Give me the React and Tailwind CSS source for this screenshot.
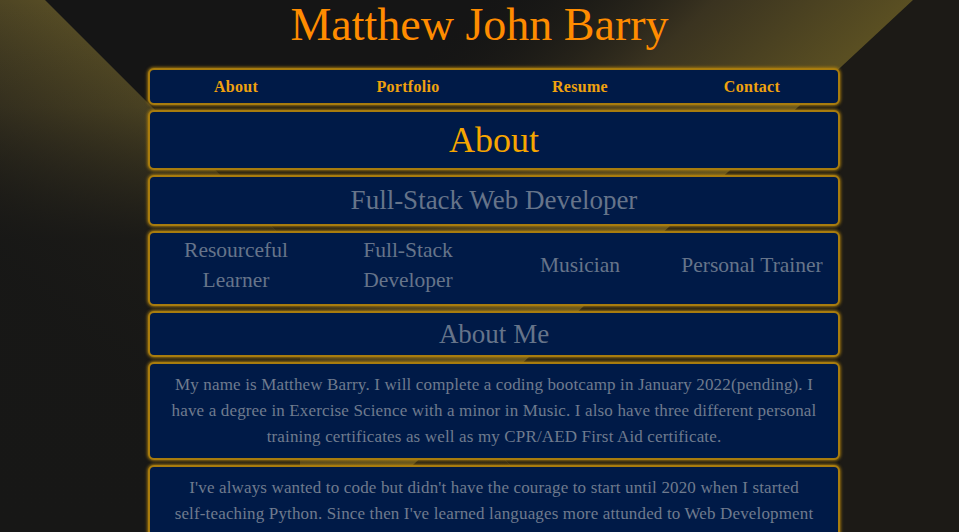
import React from "react";

const traits = [
  ["Resourceful", "Learner"],
  ["Full-Stack", "Developer"],
  ["Musician"],
  ["Personal Trainer"],
];

const navLinks = ["About", "Portfolio", "Resume", "Contact"];

function Backdrop() {
  return (
    <svg className="absolute inset-0 w-full h-full" viewBox="0 0 959 532" preserveAspectRatio="none">
      <defs>
        <linearGradient id="beamL" gradientUnits="userSpaceOnUse" x1="96" y1="50" x2="-60" y2="210">
          <stop offset="0" stopColor="#564c25" />
          <stop offset="0.5" stopColor="#3a3420" />
          <stop offset="1" stopColor="#1c1b17" />
        </linearGradient>
        <linearGradient id="beamLfade" gradientUnits="userSpaceOnUse" x1="0" y1="0" x2="0" y2="532">
          <stop offset="0" stopColor="#171716" stopOpacity="0" />
          <stop offset="0.2" stopColor="#171716" stopOpacity="0.2" />
          <stop offset="0.45" stopColor="#171716" stopOpacity="0.9" />
          <stop offset="1" stopColor="#171716" stopOpacity="1" />
        </linearGradient>
        <linearGradient id="beamR" gradientUnits="userSpaceOnUse" x1="876" y1="34" x2="672" y2="-185">
          <stop offset="0" stopColor="#5a4f22" />
          <stop offset="0.45" stopColor="#3a3320" />
          <stop offset="1" stopColor="#141413" stopOpacity="0" />
        </linearGradient>
      </defs>
      <rect width="959" height="532" fill="#151515" />
      <polygon points="913,0 959,0 959,532 840,532 840,68" fill="#1c1a16" />
      <polygon points="0,0 45,0 577,532 0,532" fill="url(#beamL)" />
      <polygon points="0,0 45,0 577,532 0,532" fill="url(#beamLfade)" />
      <polygon points="913,0 300,0 300,570 " fill="url(#beamR)" />
    </svg>
  );
}

function Panel({ className = "", children }) {
  return (
    <div
      className={
        "rounded-[6px] border-2 border-[#a87c0e] bg-[#001a47] shadow-[0_0_3px_1px_rgba(176,130,14,0.8)] " +
        className
      }
    >
      {children}
    </div>
  );
}

export default function App() {
  return (
    <div
      className="relative w-[959px] h-[532px] overflow-hidden"
      style={{ fontFamily: '"Liberation Serif", serif' }}
    >
      <Backdrop />
      <div className="relative flex flex-col">
        <h1 className="text-center text-[46px] leading-[50px] text-[#ff8c00] h-[68px]">Matthew John Barry</h1>

        <div className="ml-[148px] w-[692px] flex flex-col gap-[5px]">
          <Panel className="h-[37px] grid grid-cols-4 items-center pt-[1px]">
            {navLinks.map((l) => (
              <a key={l} className="text-center text-[16px] tracking-[0.3px] font-bold text-[#f0a20e] leading-none">
                {l}
              </a>
            ))}
          </Panel>

          <Panel className="h-[60px] flex items-center justify-center">
            <h2 className="text-[36px] text-[#f7a600] leading-none">About</h2>
          </Panel>

          <Panel className="h-[51px] flex items-center justify-center">
            <h3 className="text-[27px] text-[#66748a] leading-none">Full-Stack Web Developer</h3>
          </Panel>

          <Panel className="h-[75px] grid grid-cols-4 items-center pb-[7px]">
            {traits.map((t) => (
              <div key={t[0]} className="text-center text-[21.5px] leading-[30px] text-[#66748a]">
                {t.map((line) => (
                  <div key={line}>{line}</div>
                ))}
              </div>
            ))}
          </Panel>

          <Panel className="h-[46px] flex items-center justify-center">
            <h3 className="text-[27px] text-[#66748a] leading-none">About Me</h3>
          </Panel>

          <Panel className="h-[98px] px-[16px] pt-[8px]">
            <p className="text-center text-[17px] tracking-[0.15px] leading-[26px] text-[#6f7b8e]">
              My name is Matthew Barry. I will complete a coding bootcamp in January 2022(pending). I have a degree in
              Exercise Science with a minor in Music. I also have three different personal training certificates as
              well as my CPR/AED First Aid certificate.
            </p>
          </Panel>

          <Panel className="h-[120px] px-[16px] pt-[8px]">
            <p className="text-center text-[17px] tracking-[0.15px] leading-[26px] text-[#6f7b8e]">
              I've always wanted to code but didn't have the courage to start until 2020 when I started{" "}
              <span className="whitespace-nowrap">self-teaching</span> Python. Since then I've learned languages more
              attunded to Web Development and I love creating things that people can use.
            </p>
          </Panel>
        </div>
      </div>
    </div>
  );
}
